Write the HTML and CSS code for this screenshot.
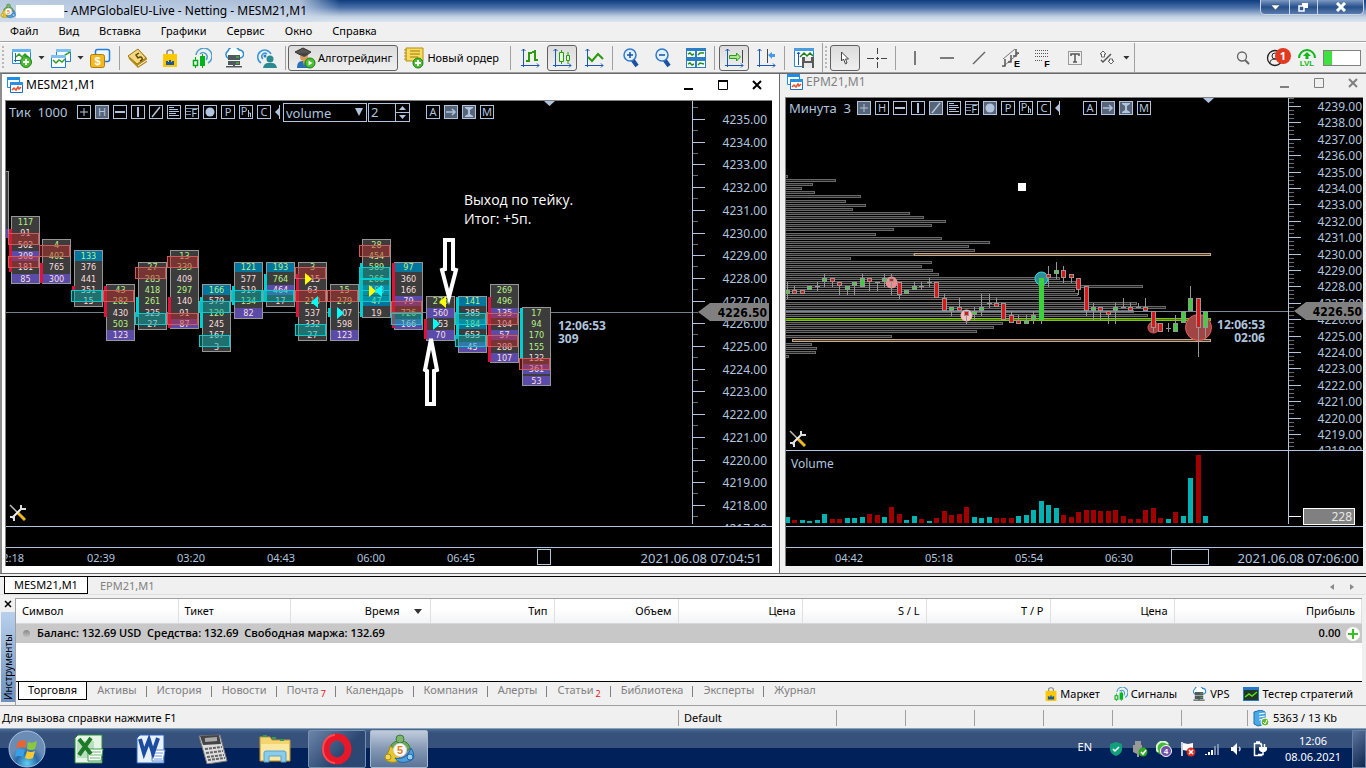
FILE: index.html
```html
<!DOCTYPE html>
<html lang="ru">
<head>
    <meta charset="UTF-8">
    <meta name="viewport" content="width=device-width, initial-scale=1.0">
    <title>AMPGlobalEU-Live - Netting - MESM21,M1</title>
    <link rel="stylesheet" href="styles.css">
</head>
<body>

    <!-- Общие иконки -->
    <svg class="sprite" aria-hidden="true">
        <symbol id="i-mt5" viewBox="0 0 32 32">
            <path d="M7 17c0-6 4-8 7-9h6c4 1 7 4 7 8l-4 2-12 1z" fill="#6aa85c" stroke="#3c7a36"/><circle cx="17" cy="6" r="4" fill="#7cb86c" stroke="#3c7a36"/>
            <path d="M7 13c5 2 5 9 11 13-4 5-15 4-16-1 1-3 4-5 5-12z" fill="#e6c62c" stroke="#a88a10"/><circle cx="5" cy="24" r="3" fill="#f0d860" stroke="#a88a10"/>
            <path d="M28 15c4 6 4 12-2 13-6 3-12 1-14-3 8 2 13-2 16-10z" fill="#4f9fdc" stroke="#1c66a8"/><circle cx="27" cy="24" r="3" fill="#9cd0f4" stroke="#1c66a8"/>
            <circle cx="17" cy="17" r="6.500" fill="#fff" stroke="#d8d8d8"/>
            <text x="17" y="21" class="five">5</text>
        </symbol>
        <symbol id="i-win" viewBox="0 0 16 16">
            <path d="M.5.5h12v10H.5z" fill="#fff" stroke="#1e8fe8"/><path d="M0 0h13v3H0z" fill="#1e8fe8"/>
            <path d="M3.500 5.500h12v10h-12z" fill="#fff" stroke="#1e6fc8"/><path d="M3 5h13v3H3z" fill="#2a90e0"/>
            <path d="M5 13l2-2 2 2 2-3 1 2 2-2" fill="none" stroke="#e8502a" stroke-width="1.500"/>
        </symbol>
        <symbol id="i-bag" viewBox="0 0 14 18">
            <path d="M4 6V3q0-2 3-2t3 2v3" fill="none" stroke="#888" stroke-width="1.500"/>
            <path d="M0 5h14v13H0z" fill="#ffc800"/><path d="M3 16v-4h2v1h1v-2h2v2h1v-1h2v4z" fill="#1c58a0"/>
        </symbol>
        <symbol id="i-signal" viewBox="0 0 20 20">
            <path d="M4 7a8 8 0 1 1 12 8M8 6a4 4 0 1 1 6 6" fill="none" stroke="#4c9ed0" stroke-width="1.500"/>
            <path d="M3.500 9v11M10.500 6v14" stroke="#00a818"/><path d="M1.500 12.500h4v5h-4z" fill="#fff" stroke="#00a818" stroke-width="1.500"/><path d="M8 8h5v10H8z" fill="#00b41c"/>
        </symbol>
        <symbol id="i-cloud" viewBox="0 0 20 20">
            <path d="M4 10a4 4 0 0 1 0-7 6 6 0 0 1 11-1 4 4 0 0 1 1 8z" fill="#fff" stroke="#2b8cd2" stroke-width="1.500"/>
            <path d="M4 7h12v5H4zM4 13h12v4H4zM9 17h2v2H9zM2 18h16v1.500H2z" fill="#505a5c"/><path d="M12 9h3M12 15h3" stroke="#54d832"/>
        </symbol>
        <symbol id="i-tools" viewBox="0 0 18 18">
            <path d="M1 1l9 9" stroke="#bbb" stroke-width="1.500"/><path d="M9 9l7 7" stroke="#f0b820" stroke-width="3"/>
            <path d="M3 14L13 4" stroke="#eee" stroke-width="2"/><path d="M12 1v4h5M1 13h4v4" fill="none" stroke="#ddd" stroke-width="2"/>
        </symbol>
    </svg>

    <header class="titlebar">
        <svg class="app-icon"><use href="#i-mt5"/></svg>
        <span class="account"></span>
        <h1>- AMPGlobalEU-Live - Netting - MESM21,M1</h1>
        <div class="win-buttons">
            <button aria-label="Свернуть"><svg width="11" height="7"><path d="M1 1h9l-4.500 5z" fill="#fff" stroke="#345" stroke-width=".5"/></svg></button>
            <button aria-label="Восстановить"><svg width="11" height="10"><path d="M4 1h6v5H4z" fill="#fff"/><path d="M1 4h5v5H1z" fill="#345a90" stroke="#fff" stroke-width="1.500"/></svg></button>
            <button class="wide" aria-label="Закрыть"><svg width="12" height="10"><path d="M2 1l8 8M10 1l-8 8" stroke="#fff" stroke-width="3"/></svg></button>
        </div>
    </header>

    <nav class="menubar">
        <button>Файл</button>
        <button>Вид</button>
        <button>Вставка</button>
        <button>Графики</button>
        <button>Сервис</button>
        <button>Окно</button>
        <button>Справка</button>
    </nav>

    <div class="toolbar">
        <span class="grip"></span>
        <button class="tool" aria-label="Новый график"><svg width="22" height="20"><path d="M1.500 1.500h18v14h-18z" fill="#fff" stroke="#2a8ce0"/><path d="M1 1h19v3H1z" fill="#68b4f0"/><path d="M4.500 5v9M3 12.500h14" stroke="#2068b0"/><path d="M5 9l3-3 3 3 3-3 4 4" fill="none" stroke="#30a020" stroke-width="1.500"/><circle cx="15" cy="14" r="5.500" fill="#4cc030" stroke="#218018"/><path d="M12 14h6M15 11v6" stroke="#fff" stroke-width="2"/></svg></button>
        <button class="caret" aria-label="Список графиков"></button>
        <button class="tool" aria-label="Профили"><svg width="22" height="20"><path d="M6.500 1.500h14v12h-14z" fill="#fff" stroke="#1f7fd8"/><path d="M6 1h15v3H6z" fill="#7cc0f4"/><path d="M12 10l3-3 5-3" fill="none" stroke="#30a020" stroke-width="1.500"/><path d="M1.500 7.500h14v12h-14z" fill="#fff" stroke="#1f7fd8"/><path d="M1 7h15v3H1z" fill="#7cc0f4"/><path d="M3 12l3 3 3-3 3 2 3-3" fill="none" stroke="#30a020" stroke-width="1.500"/></svg></button>
        <button class="caret" aria-label="Список профилей"></button>
        <button class="tool" aria-label="Обзор рынка"><svg width="22" height="20"><rect x="6.500" y="1.500" width="14" height="12" rx="2" fill="#eef7ff" stroke="#1f7fd8" stroke-width="1.500"/><rect x="1.500" y="6.500" width="14" height="13" rx="2" fill="#f4b820" stroke="#b07c08"/><text x="8.500" y="17" class="dollar">$</text></svg></button>
        <span class="sep"></span>
        <button class="tool" aria-label="Стакан"><svg width="22" height="20"><path d="M1 8l10-7 9 9v4l-9 6-9-9z" fill="#b88818"/><path d="M1 8l10-7 8 9-9 6z" fill="#f4d880" stroke="#a07c18"/><path d="M12 5l-3 2 2 3q3-2 4 0t-2 3" fill="none" stroke="#604808" stroke-width="1.500"/><path d="M11 18l9-6" stroke="#fff"/></svg></button>
        <button class="tool" aria-label="Маркет"><svg width="14" height="18"><use href="#i-bag"/></svg></button>
        <button class="tool" aria-label="Сигналы"><svg width="20" height="20"><use href="#i-signal"/></svg></button>
        <button class="tool" aria-label="VPS"><svg width="20" height="20"><use href="#i-cloud"/></svg></button>
        <button class="tool" aria-label="Сообщество"><svg width="22" height="20"><path d="M6 15A7 7 0 1 1 16 6M8 11a3 3 0 1 1 4-5" fill="none" stroke="#3a96d8" stroke-width="1.500"/><circle cx="10" cy="8" r="1.500" fill="#2880c0"/><circle cx="15" cy="11" r="3.500" fill="#2a8a90"/><path d="M8 20q1-5 5-5h4q4 0 5 5z" fill="#2a8a90"/></svg></button>
        <span class="sep"></span>
        <button class="text-tool pressed"><svg width="22" height="22"><path d="M1 5l8-4 8 4-7 5z" fill="#555" stroke="#333"/><circle cx="10" cy="10" r="4" fill="#d89a60"/><path d="M6 8l4 2 4-2V6H6z" fill="#444"/><path d="M3 21q0-7 5-7h4q5 0 5 7z" fill="#2a70b8"/><path d="M9 14l1 5 1-5z" fill="#f0b020"/><circle cx="16" cy="16" r="5" fill="#48c030" stroke="#208018"/><path d="M14.500 13.500l4 2.500-4 2.500z" fill="#fff"/></svg>Алготрейдинг</button>
        <button class="text-tool"><svg width="22" height="22"><path d="M3 1h17v13H3z" fill="#f8dc60" stroke="#b48c10"/><path d="M1 3h3M1 6h3M1 9h3M1 12h3" stroke="#b48c10"/><path d="M7 4h10M7 7h10M7 10h8" stroke="#a07808"/><circle cx="15" cy="16" r="5" fill="#48c030" stroke="#208018"/><path d="M12 16h6M15 13v6" stroke="#fff" stroke-width="2"/></svg>Новый ордер</button>
        <span class="sep wide-sep"></span>
        <button class="tool" aria-label="Бары"><svg width="20" height="20"><path d="M3.500 1v18M1 17.500h18M1.500 3l2-2 2 2M17 15.500l2 2-2 2" fill="none" stroke="#1a56b8"/><path d="M9 4v10M6 13h3M9 5h3M15 2v11M12 4h3M15 12h3" stroke="#2a9a10" stroke-width="2"/></svg></button>
        <button class="tool pressed" aria-label="Свечи"><svg width="20" height="20"><path d="M3.500 1v18M1 17.500h18M1.500 3l2-2 2 2M17 15.500l2 2-2 2" fill="none" stroke="#1a56b8"/><path d="M9.500 2v14M16 4v12" stroke="#2a9a10"/><path d="M7.500 4.500h4v9h-4zM14.500 7.500h3v5h-3z" fill="#e8ffe0" stroke="#2a9a10"/></svg></button>
        <button class="tool" aria-label="Линия"><svg width="20" height="20"><path d="M3.500 1v18M1 17.500h18M1.500 3l2-2 2 2M17 15.500l2 2-2 2" fill="none" stroke="#1a56b8"/><path d="M4 9l4 4 6-7 5 5" fill="none" stroke="#2a9a10" stroke-width="2"/></svg></button>
        <span class="sep"></span>
        <button class="tool" aria-label="Увеличить"><svg width="20" height="20"><path d="M10 11l5 7" stroke="#1c50a0" stroke-width="4"/><circle cx="8" cy="7" r="6" fill="#dff0ff" stroke="#3478c8" stroke-width="1.500"/><path d="M5 7h6M8 4v6" stroke="#1c50a0" stroke-width="1.500"/></svg></button>
        <button class="tool" aria-label="Уменьшить"><svg width="20" height="20"><path d="M10 11l5 7" stroke="#1c50a0" stroke-width="4"/><circle cx="8" cy="7" r="6" fill="#dff0ff" stroke="#3478c8" stroke-width="1.500"/><path d="M5 7h6" stroke="#1c50a0" stroke-width="1.500"/></svg></button>
        <button class="tool" aria-label="Плитка"><svg width="20" height="20"><path d="M0 0h20v20H0z" fill="#2a80c8"/><path d="M1 3h8v6H1zM11 3h8v6h-8zM1 13h8v6H1zM11 13h8v6h-8z" fill="#fff"/><path d="M2 6l2-1 2 2 2-1M12 7l2-2 4 0M2 16l2-1 2 2 2-1M12 17l2-2 4 1" fill="none" stroke="#209018" stroke-width="1.500"/></svg></button>
        <span class="sep"></span>
        <button class="tool pressed" aria-label="Автопрокрутка"><svg width="20" height="20"><path d="M3.500 1v18M1 17.500h18M1.500 3l2-2 2 2M17 15.500l2 2-2 2" fill="none" stroke="#1a56b8"/><path d="M18.500 2v13" stroke="#444"/><path d="M5.500 7.500h7V5l4 4-4 4v-2.500h-7z" fill="#a8e890" stroke="#2c9a18"/></svg></button>
        <button class="tool" aria-label="Сдвиг графика"><svg width="20" height="20"><path d="M3.500 1v18M1 17.500h18M1.500 3l2-2 2 2M17 15.500l2 2-2 2" fill="none" stroke="#1a56b8"/><path d="M11.500 1v14" stroke="#444"/><path d="M19 6h-3V4l-4 3 4 4V9h3z" fill="#4a98e8"/></svg></button>
        <span class="sep"></span>
        <button class="tool" aria-label="Шаблоны"><svg width="20" height="20"><path d="M.5.5h19v18H.5z" fill="#fff" stroke="#2a88d8"/><path d="M0 0h20v3H0z" fill="#4a9ce0"/><path d="M4.500 4v13M3 6l1.500-2L6 6" fill="none" stroke="#1a56b8"/><path d="M6 9l4-4 3 3 3-3 3 3" fill="none" stroke="#208018" stroke-width="1.500"/><path d="M8 9h12v11H8z" fill="#5a5a5a"/><path d="M11 9h6v4h-6zM10 15h8v5h-8z" fill="#e8e8e8"/></svg></button>
        <span class="edge"></span>
        <span class="grip"></span>
        <button class="tool pressed" aria-label="Курсор"><svg width="10" height="14"><path d="M1.500 1v9l2-2 2 5 1.500-1-1.500-4h3z" fill="#fff" stroke="#444"/></svg></button>
        <button class="tool" aria-label="Перекрестие"><svg width="20" height="20"><path d="M0 10.500h7M9 10.500h3M14 10.500h6M10.500 0v6M10.500 9v3M10.500 14v6" stroke="#444"/></svg></button>
        <span class="sep"></span>
        <button class="tool" aria-label="Вертикальная линия"><svg width="4" height="14"><path d="M2 0v14" stroke="#555" stroke-width="1.500"/></svg></button>
        <button class="tool" aria-label="Горизонтальная линия"><svg width="14" height="4"><path d="M0 2h14" stroke="#555" stroke-width="1.500"/></svg></button>
        <button class="tool" aria-label="Трендовая линия"><svg width="14" height="14"><path d="M1 13L13 1" stroke="#666" stroke-width="1.500"/></svg></button>
        <button class="tool" aria-label="Каналы"><svg width="20" height="20"><path d="M2 11L14 1M4 17L18 5" stroke="#777"/><path d="M1 18h3v-7M7 14h3V7M12 8h3V1M15 5h3" fill="none" stroke="#555" stroke-width="1.500"/><text x="16" y="19" class="letter">E</text></svg></button>
        <button class="tool" aria-label="Фибоначчи"><svg width="18" height="20"><path d="M1 2.500h14M1 5.500h14M1 8.500h14M1 12.500h8" stroke="#555" stroke-dasharray="1 1"/><text x="13" y="19" class="letter">F</text></svg></button>
        <button class="tool" aria-label="Текст"><svg width="16" height="16"><path d="M1.500 1.500h13v13h-13z" fill="none" stroke="#444" stroke-dasharray="1 1"/><path d="M4 6V4h8v2M8 4v8M6 12h4" fill="none" stroke="#555" stroke-width="1.500"/></svg></button>
        <button class="tool" aria-label="Объекты"><svg width="16" height="16"><path d="M4 1l3 3H5.500v3h-3V4H1zM12 14l-3-3h1.500V9h3v2H15z" fill="#fff" stroke="#666"/><path d="M2 10l2 2 8-8" fill="none" stroke="#555" stroke-width="1.500"/></svg></button>
        <button class="caret" aria-label="Список объектов"></button>
        <span class="edge"></span>
        <div class="toolbar-right">
            <button class="tool" aria-label="Поиск"><svg width="14" height="14"><circle cx="6" cy="5.500" r="4.500" fill="none" stroke="#666" stroke-width="1.300"/><path d="M9 9l4 4" stroke="#666" stroke-width="2"/></svg></button>
            <button class="tool account-tool" aria-label="Уведомления"><svg width="18" height="18"><circle cx="9" cy="9" r="7.500" fill="none" stroke="#222" stroke-width="1.300"/><circle cx="9" cy="7" r="3" fill="none" stroke="#222"/><path d="M4 14q0-4 5-4t5 4" fill="none" stroke="#222"/></svg><span class="badge">1</span></button>
            <button class="tool" aria-label="Уровень"><svg width="20" height="20"><path d="M2 10a8 8 0 0 1 16 0" fill="none" stroke="#10b818" stroke-width="2"/><path d="M10 4l4 4h-2.500v3h-3V8H6z" fill="#10b818"/><text x="10" y="18" class="lvl">LVL</text></svg></button>
            <span class="level"><i></i></span>
        </div>
    </div>

    <main class="workspace">
        <section class="window active" id="mes">
            <header>
                <svg width="16" height="16"><use href="#i-win"/></svg>
                <h2>MESM21,M1</h2>
                <div class="mdi-buttons">
                    <button aria-label="Свернуть окно"><svg width="12" height="12"><path d="M1 10h9" stroke="currentColor" stroke-width="2"/></svg></button>
                    <button aria-label="Развернуть окно"><svg width="12" height="12"><path d="M1.500 1.500h9v9h-9z" fill="none" stroke="currentColor"/><path d="M1 2h10" stroke="currentColor" stroke-width="2"/></svg></button>
                    <button aria-label="Закрыть окно"><svg width="12" height="12"><path d="M2 2l8 8M10 2l-8 8" stroke="currentColor" stroke-width="2"/></svg></button>
                </div>
            </header>
            <div class="chart">
                <div class="chart-tools">
                    <span class="period">Тик&nbsp; 1000</span>
                    <div class="mini" data-set="draw" data-on="H"></div>
                    <select aria-label="Тип данных"><option>volume</option></select>
                    <span class="spin">
                        <input type="text" value="2" aria-label="Множитель">
                        <button aria-label="Больше"><svg width="7" height="4"><path d="M0 4h7L3.500 0z" fill="#b0c4de"/></svg></button>
                        <button aria-label="Меньше"><svg width="7" height="4"><path d="M0 0h7L3.500 4z" fill="#b0c4de"/></svg></button>
                    </span>
                    <div class="mini" data-set="mode" data-on="arrow,ibeam"></div>
                </div>
                <div class="row main-row">
                    <svg class="plot" id="clusterPlot"></svg>
                    <svg class="axis" id="clusterAxis"></svg>
                </div>
                <div class="gap-row"></div>
                <div class="row time-row">
                    <svg class="plot" id="clusterTime"></svg>
                    <time>2021.06.08 07:04:51</time>
                </div>
            </div>
        </section>
        <section class="window" id="epm">
            <header>
                <svg width="16" height="16"><use href="#i-win"/></svg>
                <h2>EPM21,M1</h2>
                <div class="mdi-buttons">
                    <button aria-label="Свернуть окно"><svg width="12" height="12"><path d="M1 10h9" stroke="currentColor" stroke-width="2"/></svg></button>
                    <button aria-label="Развернуть окно"><svg width="12" height="12"><path d="M1.500 1.500h9v9h-9z" fill="none" stroke="currentColor"/></svg></button>
                    <button aria-label="Закрыть окно"><svg width="12" height="12"><path d="M2 2l8 8M10 2l-8 8" stroke="currentColor" stroke-width="2"/></svg></button>
                </div>
            </header>
            <div class="chart">
                <div class="chart-tools">
                    <span class="period">Минута&nbsp; 3</span>
                    <div class="mini" data-set="draw" data-on="plus,line,dot"></div>
                    <div class="mini" data-set="mode" data-on="arrow,ibeam"></div>
                </div>
                <div class="row main-row">
                    <svg class="plot" id="candlePlot"></svg>
                    <svg class="axis" id="candleAxis"></svg>
                </div>
                <div class="row volume-row">
                    <svg class="plot" id="volumePlot"></svg>
                    <svg class="axis" id="volumeAxis"></svg>
                </div>
                <div class="gap-row"></div>
                <div class="row time-row">
                    <svg class="plot" id="candleTime"></svg>
                    <time>2021.06.08 07:06:00</time>
                </div>
            </div>
        </section>
    </main>

    <nav class="chart-tabs">
        <button class="current">MESM21,M1</button>
        <button>EPM21,M1</button>
        <span class="scroll"><button aria-label="Назад"><svg width="4" height="6"><path d="M4 0v6L0 3z" fill="#888"/></svg></button><button aria-label="Вперед"><svg width="4" height="6"><path d="M0 0v6l4-3z" fill="#888"/></svg></button></span>
    </nav>

    <section class="terminal">
        <aside>
            <button aria-label="Закрыть панель"><svg width="8" height="8"><path d="M1 1l6 6M7 1L1 7" stroke="#000" stroke-width="1.500"/></svg></button>
            <span>Инструменты</span>
        </aside>
        <div class="panel">
            <table>
                <colgroup><col class="c-symbol"><col class="c-ticket"><col class="c-time"><col class="c"><col class="c"><col class="c"><col class="c"><col class="c"><col class="c"><col></colgroup>
                <thead>
                    <tr>
                        <th class="left">Символ</th>
                        <th class="left">Тикет</th>
                        <th class="sorted">Время<svg width="8" height="5"><path d="M0 0h8L4 5z" fill="#333"/></svg></th>
                        <th>Тип</th>
                        <th>Объем</th>
                        <th>Цена</th>
                        <th>S / L</th>
                        <th>T / P</th>
                        <th>Цена</th>
                        <th>Прибыль</th>
                    </tr>
                </thead>
                <tbody>
                    <tr>
                        <td colspan="9"><i class="dot"></i>Баланс: 132.69 USD&nbsp; Средства: 132.69&nbsp; Свободная маржа: 132.69</td>
                        <td class="profit">0.00<button aria-label="Добавить"><svg width="14" height="14"><circle cx="7" cy="7" r="7" fill="#fff"/><path d="M2 7h10M7 2v10" stroke="#38c020" stroke-width="2"/></svg></button></td>
                    </tr>
                </tbody>
            </table>
            <nav class="panel-tabs">
                <button class="current">Торговля</button>
                <button>Активы</button>
                <button>История</button>
                <button>Новости</button>
                <button>Почта<sub>7</sub></button>
                <button>Календарь</button>
                <button>Компания</button>
                <button>Алерты</button>
                <button>Статьи<sub>2</sub></button>
                <button>Библиотека</button>
                <button>Эксперты</button>
                <button>Журнал</button>
                <div class="services">
                    <a href="#"><svg width="12" height="14"><use href="#i-bag"/></svg>Маркет</a>
                    <a href="#"><svg width="14" height="14"><use href="#i-signal"/></svg>Сигналы</a>
                    <a href="#"><svg width="16" height="14"><use href="#i-cloud"/></svg>VPS</a>
                    <a href="#"><svg width="16" height="14"><path d="M0 0h16v14H0z" fill="#2878c8"/><path d="M1 3h14v10H1z" fill="#203828"/><path d="M2 10l4-3 3 2 5-4" fill="none" stroke="#58e020" stroke-width="1.500"/></svg>Тестер стратегий</a>
                </div>
            </nav>
        </div>
    </section>

    <footer class="statusbar">
        <span class="help">Для вызова справки нажмите F1</span>
        <span class="profile">Default</span>
        <span class="cell"></span>
        <span class="cell"></span>
        <span class="cell"></span>
        <span class="cell"></span>
        <span class="cell"></span>
        <span class="traffic"><svg width="17" height="17"><path d="M1 2l7-2 4 2v12l-7 2-4-2z" fill="#48a8e8" stroke="#1870b0"/><path d="M6 4l6-1M6 7l6-1M6 10l6-1" stroke="#fff"/><circle cx="12" cy="12" r="4" fill="#60b830" stroke="#fff"/><path d="M10 12l2 2 2-4" fill="none" stroke="#fff"/></svg>5363 / 13 Kb</span>
    </footer>

    <div class="taskbar">
        <button class="start" aria-label="Пуск"><svg width="40" height="38"><defs><radialGradient id="orb" cy=".9"><stop offset="0" stop-color="#5fd0f4"/><stop offset=".6" stop-color="#2a6aa8"/><stop offset="1" stop-color="#6b8cb4"/></radialGradient></defs><circle cx="20" cy="19" r="18" fill="url(#orb)" stroke="#a8c4dc"/><path d="M11 12q4-3 8-1l-1 7q-4-2-9 0z" fill="#f0622c"/><path d="M21 12q4 2 9-1l-2 8q-4 2-8 0z" fill="#8cc83c"/><path d="M9 20q5-2 9 0l-2 7q-4-2-8 0z" fill="#38a0e8"/><path d="M20 21q4 2 8 0l-2 7q-4 2-8 0z" fill="#fcc830"/></svg></button>
        <button class="task" aria-label="Excel"><svg width="30" height="30"><path d="M1 4l3-3h24v28H1z" fill="#e6f4e6" stroke="#2c8a38"/><path d="M3 7h17v17H3z" fill="#b8e0bc"/><path d="M14 15h15l-2 12H14z" fill="#fff" stroke="#3a9a48"/><path d="M16 18h11M16 21h11M16 24h10" stroke="#6ab870"/><path d="M5 5l12 15M17 4L5 21" stroke="#1c7a28" stroke-width="4"/></svg></button>
        <button class="task" aria-label="Word"><svg width="30" height="30"><path d="M1 4l3-3h24v28H1z" fill="#e8f0fc" stroke="#2a64b8"/><path d="M16 16h13l-2 11H16z" fill="#fff" stroke="#5a8cd0"/><path d="M18 19h9M18 22h8M18 25h8" stroke="#6a98d8"/><path d="M4 5l4 14 5-13 4 13 5-15" fill="none" stroke="#1c4ca0" stroke-width="4"/></svg></button>
        <button class="task" aria-label="Калькулятор"><svg width="30" height="30"><path d="M1 2l21-1 7 26-20 3z" fill="#ddd" stroke="#777"/><path d="M2 2l19-1 2 9-18 1z" fill="#444"/><path d="M7 6l12-1" stroke="#aaa" stroke-width="4"/><path d="M7 15l17-2M8 19l17-2M9 23l17-2M10 26l17-2" stroke="#666" stroke-width="2" stroke-dasharray="3 1"/></svg></button>
        <button class="task" aria-label="Проводник"><svg width="32" height="30"><path d="M1 3h10l2 3h18v21H1z" fill="#f4d470" stroke="#c49a30"/><path d="M4 2h4M13 4h4M21 6h4" stroke="#30a050" stroke-width="2"/><path d="M2 10h28v16H2z" fill="#fbe8a0"/><path d="M5 28V19q0-2 2-2h18q2 0 2 2v9h-5v-6H10v6z" fill="#8accec" stroke="#5aa0cc"/></svg></button>
        <button class="task open" aria-label="Opera"><svg width="32" height="32"><ellipse cx="16" cy="16" rx="11" ry="12" fill="none" stroke="#e81828" stroke-width="7"/><path d="M14 2a12 14 0 0 0 0 28" fill="none" stroke="#ff4a50" stroke-width="2"/></svg></button>
        <button class="task focused" aria-label="MetaTrader 5"><svg width="32" height="32"><use href="#i-mt5"/></svg></button>
        <div class="tray">
            <span class="lang">EN</span>
            <svg width="16" height="16"><path d="M2 3l6-2 6 2v6q-1 4-6 6-5-2-6-6z" fill="#10a07c"/><path d="M5 8l2 2 4-4" fill="none" stroke="#fff" stroke-width="1.500"/></svg>
            <svg width="16" height="16"><path d="M3 0h6v4H3zM1 4h9v7l-3 2v3H5v-3l-4-2z" fill="#999"/><circle cx="11" cy="11" r="4.500" fill="#30a820"/><path d="M9 11l2 2 3-4" fill="none" stroke="#fff" stroke-width="1.500"/></svg>
            <svg width="16" height="16"><circle cx="7" cy="7" r="7" fill="#48b838"/><path d="M2 11A6 6 0 0 1 12 3" fill="none" stroke="#d8f8d0" stroke-width="2"/><circle cx="10" cy="10" r="5.500" fill="#7050a8" stroke="#fff"/><text x="10" y="13" class="tray-num">4</text></svg>
            <svg width="16" height="16"><path d="M2 1v14" stroke="#fff" stroke-width="1.500"/><path d="M3 2l5 1 5-1v7l-5 1-5-1z" fill="#fff"/><circle cx="11" cy="11" r="4.500" fill="#d83020"/><path d="M9 9l4 4M13 9l-4 4" stroke="#fff" stroke-width="1.500"/></svg>
            <svg width="16" height="16"><path d="M1 13h2v1H1zM4 11h2v3H4zM7 9h2v5H7z" fill="#fff"/><path d="M10 5h2v9h-2zM13 3h2v11h-2z" fill="#7a8cac"/></svg>
            <svg width="16" height="16"><path d="M3 6h2l4-4v12l-4-4H3z" fill="#fff"/><path d="M11 6q2 2 0 4" fill="none" stroke="#ccd" stroke-width="1.500"/></svg>
            <svg width="16" height="16"><path d="M9 4V2.500H2.500v12h7V13M4 1h4" fill="none" stroke="#fff" stroke-width="1.500"/><path d="M7 6h8v3l-2 2H9L7 9z" fill="#fff"/><path d="M9.500 3v3M12.500 3v3M11 11v2.500H6" fill="none" stroke="#fff" stroke-width="1.500"/></svg>
        </div>
        <div class="clock"><span>12:06</span><span>08.06.2021</span></div>
        <button class="show-desktop" aria-label="Показать рабочий стол"></button>
    </div>

    <script src="charts.js"></script>
</body>
</html>
```
FILE: styles.css
```css
* {
    box-sizing: border-box;
}
body {
    display: flex;
    flex-direction: column;
    min-height: 100vh;
    margin: 0;
    overflow: hidden;
    background: #f0f0f0;
    color: #000;
    font-family: "Noto Sans", "Open Sans", sans-serif;
    font-size: 12px;
    line-height: 16px;
}
button {
    padding: 0;
    border: 0;
    background: none;
    color: inherit;
    font: inherit;
}
svg {
    flex: none;
}
h1, h2 {
    margin: 0;
    font-size: 12px;
    font-weight: 400;
    white-space: nowrap;
}
.sprite {
    position: absolute;
    width: 0;
    height: 0;
}
.five {
    font: bold 11px "Liberation Sans", sans-serif;
    fill: #f07820;
    text-anchor: middle;
}

/* Заголовок окна */
.titlebar {
    display: flex;
    height: 22px;
    align-items: center;
    background:
        linear-gradient(90deg, rgba(205, 218, 234, .9), rgba(205, 218, 234, .8) 300px, rgba(160, 190, 225, 0) 340px),
        linear-gradient(#0e3c7e, #4a70a8 35%, #c0cfe2 75%, #dce6f2);
}
.app-icon {
    width: 16px;
    height: 16px;
}
.account {
    width: 48px;
    height: 13px;
    background: #fff;
}
.win-buttons {
    display: flex;
    align-self: flex-start;
    height: 15px;
    margin: 0 2px 0 auto;
    border: 1px solid #c8d4e4;
    border-top: 0;
    border-radius: 0 0 5px 5px;
    background: linear-gradient(#7e9ac2, #26508c 50%, #5a7cac);
}
.win-buttons button {
    display: flex;
    width: 28px;
    align-items: center;
    justify-content: center;
}
.win-buttons .wide {
    width: 46px;
}
.win-buttons button + button {
    border-left: 1px solid #c8d4e4;
}

/* Меню */
.menubar {
    display: flex;
    height: 20px;
    padding: 0 0 1px 10px;
    gap: 20px;
    border-bottom: 1px solid #a0a0a0;
    font-size: 11px;
}

/* Панель инструментов */
.toolbar {
    display: flex;
    height: 31px;
    align-items: center;
    border-top: 1px solid #fff;
    border-bottom: 1px solid #a0a0a0;
}
.tool {
    display: flex;
    width: 32px;
    height: 26px;
    align-items: center;
    justify-content: center;
}
.pressed {
    border: 1px solid #606060;
    border-radius: 3px;
    background: linear-gradient(#dcdcdc, #efefef);
}
.tool.pressed {
    width: 30px;
    margin: 0 1px;
}
.caret {
    width: 7px;
    height: 4px;
    background: #333;
    clip-path: polygon(0 0, 100% 0, 50% 100%);
}
.text-tool {
    display: flex;
    height: 26px;
    padding: 0 5px;
    align-items: center;
    gap: 2px;
    font-size: 11px;
    white-space: nowrap;
}
.sep {
    width: 6px;
    height: 24px;
    background: linear-gradient(#a0a0a0, #a0a0a0) center / 1px 100% no-repeat;
}
.wide-sep {
    margin-left: 4px;
}
.edge {
    height: 29px;
    margin-left: 2px;
    border-left: 1px solid #a0a0a0;
}
.caret + .edge {
    margin-left: 4px;
}
.grip {
    width: 2px;
    height: 24px;
    margin: 0 2px;
    background: repeating-linear-gradient(#b8b8b8 0 2px, transparent 2px 4px);
}
.dollar {
    font: bold 11px "Liberation Sans", sans-serif;
    fill: #fff;
    text-anchor: middle;
}
.letter {
    font: bold 9px "Liberation Sans", sans-serif;
    text-anchor: middle;
}
.lvl {
    font: bold 8px "Liberation Sans", sans-serif;
    fill: #10b818;
    text-anchor: middle;
}
.toolbar-right {
    display: flex;
    margin-left: auto;
    padding-right: 5px;
    align-items: center;
}
.account-tool {
    position: relative;
}
.badge {
    position: absolute;
    top: 3px;
    right: 0;
    width: 16px;
    height: 16px;
    border-radius: 8px;
    background: #e03a20;
    color: #fff;
    font-size: 11px;
    font-weight: 700;
}
.level {
    width: 38px;
    height: 16px;
    border: 1px solid #808080;
    background: #fff;
}
.level i {
    display: block;
    width: 8px;
    height: 14px;
    background: #40e040;
}

/* Окна графиков */
.workspace {
    display: flex;
    flex: 1;
    border-bottom: 1px solid #696969;
}
.window {
    display: flex;
    flex: 1;
    min-width: 0;
    flex-direction: column;
    padding: 0 3px 7px 5px;
    border-top: 1px solid #696969;
    color: #808080;
}
.window.active {
    flex: 0 0 57.1%;
    padding: 0 7px 7px 3px;
    border-left: 2px solid #8c8c8c;
    border-right: 1px solid #696969;
    background: #fff;
    color: #000;
}
.window header {
    display: flex;
    height: 23px;
    padding: 0 2px;
    align-items: flex-start;
    gap: 3px;
}
.window.active header {
    height: 26px;
    padding: 3px 7px 0 2px;
}
.mdi-buttons {
    display: flex;
    margin-left: auto;
    padding: 3px 2px;
    gap: 22px;
}
.active .mdi-buttons {
    padding-top: 2px;
}
.mdi-buttons button {
    display: flex;
}
.chart {
    position: relative;
    display: flex;
    flex: 1;
    flex-direction: column;
    border: solid #808080;
    border-width: 1px 0 0 1px;
    background: #000;
    color: #b0c4de;
}
.row {
    display: flex;
}
.plot {
    width: 0;
    flex: 1;
}
.axis {
    width: 80px;
}
#epm .axis {
    width: 75px;
}
.main-row {
    min-height: 352px;
    flex: 1;
}
.volume-row {
    height: 76px;
    border-top: 1px solid #b0c4de;
}
.gap-row {
    height: 21px;
    border-top: 1px solid #b0c4de;
}
.time-row {
    height: 19px;
    border-top: 1px solid #b0c4de;
}
.time-row time {
    padding: 2px 4px 0 0;
    font-size: 13px;
}
#mes .time-row time {
    padding-right: 10px;
}
.chart-tools {
    position: absolute;
    top: 2px;
    left: 3px;
    display: flex;
    height: 18px;
    align-items: center;
}
.period {
    width: 68px;
    font-size: 13px;
    white-space: nowrap;
}
.mini {
    display: flex;
    margin-right: 3px;
    gap: 4px;
}
.mini button {
    display: flex;
    width: 14px;
    height: 14px;
    border: 1px solid #b0c4de;
}
.mini .on {
    background: #586478;
}
.mini .fold {
    width: 5px;
    border-width: 0 1px 0 0;
}
.mini text {
    font-size: 11px;
    fill: #b0c4de;
    text-anchor: middle;
}
#epm .mini {
    margin-right: 23px;
}
#epm .chart-tools {
    top: 1px;
}
.chart-tools select {
    width: 84px;
    height: 19px;
    margin-right: 1px;
    padding: 0 2px;
    appearance: none;
    border: 1px solid #b0c4de;
    border-radius: 0;
    background: #000 url("data:image/svg+xml,%3Csvg xmlns='http://www.w3.org/2000/svg' width='8' height='8'%3E%3Cpath d='M0 0h8L4 8z' fill='%23b0c4de'/%3E%3C/svg%3E") no-repeat right 3px center;
    color: #b0c4de;
    font: 13px "Noto Sans", sans-serif;
}
.spin {
    display: grid;
    width: 42px;
    height: 19px;
    margin-right: 16px;
    grid-template-columns: 1fr 13px;
    grid-template-rows: 8px 9px;
    border: 1px solid #b0c4de;
}
.spin input {
    min-width: 0;
    grid-row: 1 / 3;
    padding: 0 2px;
    border: 0;
    border-right: 1px solid #b0c4de;
    background: #000;
    color: #b0c4de;
    font: 13px "Noto Sans", sans-serif;
}
.spin button {
    display: flex;
    align-items: center;
    justify-content: center;
}
.spin button:last-child {
    border-top: 1px solid #b0c4de;
}

/* Тексты внутри графиков */
.plot text, .axis text {
    font-size: 12px;
    fill: #b0c4de;
}
.plot .cell-text {
    font: 9px "DejaVu Sans Condensed", "DejaVu Sans", sans-serif;
    text-anchor: middle;
}
.plot .bid { fill: #f6dede; }
.plot .ask { fill: #b8f088; }
.plot .timer { font-weight: 700; }
.plot .note {
    font-family: "Open Sans", sans-serif;
    font-size: 14px;
    fill: #fff;
}
.plot .time-label { font-size: 11px; }
.axis .price { text-anchor: end; }
.axis .last {
    font: bold 12px "DejaVu Sans Condensed", "DejaVu Sans", sans-serif;
    fill: #000;
    text-anchor: end;
}
.axis .volume-value {
    fill: #e8e8e8;
    text-anchor: end;
}
#epm .end { text-anchor: end; }

/* Вкладки графиков */
.chart-tabs {
    display: flex;
    height: 19px;
    margin-top: 2px;
    padding-left: 4px;
    border-top: 1px solid #000;
    border-bottom: 1px solid #e0e0e0;
    color: #808080;
    font-size: 11px;
}
.chart-tabs > button {
    height: 17px;
    padding: 1px 12px 0;
}
.chart-tabs .current {
    padding: 0 9px;
    border: 1px solid #000;
    border-top: 0;
    background: #fff;
    color: #000;
}
.scroll {
    display: flex;
    margin-left: auto;
    padding-right: 12px;
    gap: 16px;
}

/* Терминал */
.terminal {
    display: flex;
    height: 107px;
    margin-top: 3px;
    padding-right: 4px;
}
.terminal aside {
    display: flex;
    width: 15px;
    flex-direction: column;
    align-items: center;
    gap: 3px;
    padding: 1px 0 2px;
}
.terminal aside button {
    height: 10px;
    line-height: 8px;
}
.terminal aside span {
    height: 90px;
    padding-top: 2px;
    background: linear-gradient(#6c90c0, #b8d0ec);
    font-size: 10px;
    line-height: 14px;
    writing-mode: vertical-rl;
    transform: rotate(180deg);
}
.panel {
    display: flex;
    flex: 1;
    flex-direction: column;
    border-top: 1px solid #a0a0a0;
    border-left: 1px solid #a0a0a0;
    background: #fff;
    font-size: 11px;
}
table {
    width: 100%;
    table-layout: fixed;
    border-collapse: collapse;
}
.c-symbol { width: 162px; }
.c-ticket { width: 112px; }
.c-time { width: 140px; }
.c { width: 124px; }
th {
    height: 24px;
    padding: 0 6px;
    border-right: 1px solid #e0e0e0;
    border-bottom: 1px solid #d8d8d8;
    background: linear-gradient(#fff 40%, #f2f3f5);
    font-weight: 400;
    text-align: right;
}
.left {
    text-align: left;
}
.sorted svg {
    margin: 0 2px 1px 14px;
}
td {
    height: 20px;
    padding: 0 7px;
    background: #c8c8c8;
    font-family: "Open Sans", sans-serif;
    font-weight: 600;
}
.dot {
    display: inline-block;
    width: 7px;
    height: 7px;
    margin-right: 7px;
    border-radius: 4px;
    background: linear-gradient(#888, #c0c0c0);
}
td.profit {
    padding-right: 2px;
    text-align: right;
}
.profit button {
    margin-left: 5px;
    vertical-align: middle;
}
.profit svg {
    display: block;
}
.panel-tabs {
    display: flex;
    height: 24px;
    margin-top: auto;
    padding-left: 2px;
    border-top: 1px solid #000;
    background: #f0f0f0;
    color: #808080;
}
.panel-tabs > button {
    height: 18px;
    padding: 0 10px 2px;
    background: linear-gradient(#808080, #808080) right 4px / 1px 11px no-repeat;
}
.panel-tabs .current {
    padding: 0 9px 1px;
    border: 1px solid #000;
    border-top: 0;
    background: #fff;
    color: #000;
}
.panel-tabs > button:last-of-type {
    background: none;
}
sub {
    margin-left: 2px;
    color: #e01020;
    font-size: 9px;
    line-height: 0;
}
.services {
    display: flex;
    margin-left: auto;
    padding: 4px 9px 4px 0;
    gap: 14px;
}
.services a {
    display: flex;
    align-items: center;
    gap: 3px;
    color: #000;
    text-decoration: none;
}

/* Строка состояния */
.statusbar {
    display: flex;
    height: 23px;
    padding: 4px 0 2px 2px;
    border-top: 1px solid #a0a0a0;
    font-size: 11px;
}
.help {
    flex: 1;
}
.statusbar span + span {
    padding-left: 5px;
    border-left: 1px solid #a0a0a0;
}
.profile { width: 158px; }
.cell { width: 69px; }
.statusbar .traffic {
    display: flex;
    width: 185px;
    padding-left: 71px;
    gap: 3px;
    background: linear-gradient(#a0a0a0, #a0a0a0) 65px 0 / 1px 100% no-repeat;
    white-space: nowrap;
}

/* Панель задач */
.taskbar {
    display: flex;
    height: 40px;
    align-items: center;
    border-top: 1px solid #8aa4bc;
    background: linear-gradient(#4c6c94, #35517c 4px 19px, #00215a 19px);
    color: #fff;
}
.start {
    display: flex;
    width: 60px;
    padding-left: 7px;
}
.task {
    display: flex;
    width: 58px;
    height: 38px;
    margin-right: 4px;
    align-items: center;
    justify-content: center;
    border-radius: 2px;
}
.open {
    border: 1px solid #7890b0;
    background: linear-gradient(135deg, #6c84a8, #2c4872 60%);
}
.focused {
    border: 1px solid #a8b8cc;
    background: linear-gradient(#c0ccdc, #8498b4 50%, #5c7498);
}
.tray {
    display: flex;
    margin-left: auto;
    align-items: center;
    gap: 8px;
}
.lang {
    margin: -4px 8px 0 0;
    font-size: 11px;
}
.tray-num {
    font: bold 8px "Liberation Sans", sans-serif;
    fill: #fff;
    text-anchor: middle;
}
.clock {
    display: flex;
    width: 84px;
    padding-left: 6px;
    flex-direction: column;
    align-items: center;
    font-size: 11px;
}
.show-desktop {
    width: 14px;
    height: 38px;
    border: 1px solid #6880a4;
    background: linear-gradient(135deg, #5c749c, #10284e);
}
```
FILE: charts.js
```js
const STEEL = '#b0c4de';
const RED = '#dc143c';
const TEAL = '#00ced1';

function rect(x, y, w, h, attrs) {
    return `<rect x="${x}" y="${y}" width="${w}" height="${h}" ${attrs}/>`;
}
function line(x1, y1, x2, y2, color) {
    return `<path d="M${x1} ${y1}L${x2} ${y2}" stroke="${color}"/>`;
}
function text(x, y, cls, value) {
    return `<text x="${x}" y="${y}" class="${cls}">${value}</text>`;
}
// сдвиг начала координат рисунка
function draw(id, dx, dy, body) {
    document.getElementById(id).innerHTML = `<g transform="translate(${-dx} ${-dy})">${body}</g>`;
}

// Кнопки над графиком
const GLYPHS = {
    plus: '<path d="M2 6h8M6 2v8" stroke="#b0c4de"/>',
    H: '<text x="6" y="10">H</text>',
    dash: '<path d="M1 6h10" stroke="#b0c4de" stroke-width="2"/>',
    bar: '<path d="M6 1v10" stroke="#b0c4de" stroke-width="2"/>',
    line: '<path d="M2 11L10 1" stroke="#b0c4de" stroke-width="1.500"/>',
    rows: '<path d="M1 1.500h5M1 3.500h9M1 5.500h10M1 7.500h7M1 9.500h10" stroke="#b0c4de"/>',
    F: '<path d="M0 2.500h12M0 5.500h5M0 8.500h5" stroke="#8090a8"/><text x="8" y="11">F</text>',
    dot: '<circle cx="6" cy="6" r="4.500" fill="#b0c4de"/>',
    P: '<text x="6" y="10">P</text>',
    Ph: '<text x="4" y="9">P</text><path d="M8.500 4v7M8.500 7h2v4" fill="none" stroke="#b0c4de"/>',
    C: '<text x="6" y="10">C</text>',
    A: '<text x="6" y="10">A</text>',
    arrow: '<path d="M1 6h9M7 3l3 3-3 3" fill="none" stroke="#b0c4de" stroke-width="1.500"/>',
    ibeam: '<path d="M2 1h8v1L7 4v4l3 2v1H2v-1l3-2V4L2 2z" fill="#b0c4de"/>',
    M: '<text x="6" y="10">M</text>'
};
const SETS = {
    draw: ['plus', 'H', 'dash', 'bar', 'line', 'rows', 'F', 'dot', 'P', 'Ph', 'C'],
    mode: ['A', 'arrow', 'ibeam', 'M']
};
document.querySelectorAll('.mini').forEach(box => {
    const on = box.dataset.on.split(',');
    box.innerHTML = SETS[box.dataset.set].map(name =>
        `<button class="${on.includes(name) ? 'on' : ''}" aria-label="${name}"><svg width="12" height="12">${GLYPHS[name]}</svg></button>`
    ).join('');
    if (box.dataset.set === 'draw') {
        box.innerHTML += '<button class="fold" aria-label="Скрыть"><svg width="4" height="14"><path d="M4 3v8L0 7z" fill="#b0c4de"/></svg></button>';
    }
});

// Кластерный график: строка = 0.5 пункта
const rowY = k => 119.7 + 11.35 * k;
// x, первая строка, ячейки (g - покупки, p/t - фон), рамки, полоса слева
const CLUSTERS = [
    [11, 9, '117g 91 502 308p 181 85p', 'r10 r12', RED, 229, 272],
    [42, 11, '4g 402g 765 300p', 'r11', RED, 263, 283],
    [74, 12, '133gt 376 441 351 15', 't15', RED, 286, 290],
    [106, 15, '43g 282g 430 503g 123p', 'r15', RED, 286, 317],
    [138, 13, '27g 283g 418g 261g 325 27', 'r13 t17', TEAL, 297, 317],
    [170, 12, '13g 339g 409 297g 140 91 87p', 'r12 r17', RED, 297, 328],
    [202, 15, '166gt 579 120g 245 167 3', 't16 t19', TEAL, 297, 328],
    [234, 13, '121gt 577 519 134g 82p', 't15', TEAL, 286, 305],
    [266, 13, '193gt 764g 464p 17', 't15', TEAL, 274, 302],
    [298, 13, '3g 415 63 210g 537 332 27', 'r13 r15 t18', RED, 274, 317],
    [330, 15, '15g 279g 107 598 123p', 'r15', TEAL, 308, 317],
    [362, 11, '28g 454g 589g 266g 188t 47gt 19', 'r11 t13 t14 t15', TEAL, 263, 317],
    [394, 13, '97gt 360 166 79p 726g 166p', 'r16 t17', RED, 263, 328],
    [426, 16, '276g 560p 353 70p', '', RED, 319, 339],
    [458, 16, '141gt 385 184gt 653 45p', 't17 t19', TEAL, 297, 339],
    [490, 15, '269g 496g 135p 104 57p 288 107p', 'r17 r19', RED, 297, 362],
    [522, 17, '17g 94g 170g 155g 132 361p 53p', 'r21', TEAL, 308, 358]
];
let out = line(6, 312.5, 700, 312.5, '#708090');
out += rect(0, 171.5, 8.5, 66, 'fill="#3c3c3c" stroke="#969696"') + rect(6, 229, 2, 9, 'fill="#5a4ba8"');
CLUSTERS.forEach(([x, k, cells, boxes, color, y1, y2]) => {
    const list = cells.split(' ');
    const top = Math.round(rowY(k) - 5.7);
    out += rect(x, top, 29, Math.round(11.35 * list.length), 'fill="#3c3c3c"');
    list.forEach((cell, i) => {
        const y = Math.round(rowY(k + i));
        const bg = cell.includes('p') ? '#5a4ba8' : cell.includes('t') ? '#00759e' : '';
        if (bg) out += rect(x, y - 5, 29, 10, `fill="${bg}"`);
        out += text(x + 14.5, y + 3, 'cell-text ' + (cell.includes('g') ? 'ask' : 'bid'), parseInt(cell));
    });
    out += rect(x + .5, top + .5, 28, Math.round(11.35 * list.length) - 1, 'fill="none" stroke="#969696"');
    out += rect(x - 2, y1, 3, y2 - y1, `fill="${color}"`);
    boxes.split(' ').filter(Boolean).forEach(b => {
        const c = b[0] === 'r' ? '#cd5c5c' : TEAL;
        const fill = b[0] === 'r' ? '#c02828' : '#00b0b0';
        out += rect(x - 2.5, Math.round(rowY(+b.slice(1))) + .5, 30, 11, `fill="${fill}" fill-opacity=".45" stroke="${c}"`);
    });
});
// метки сделок
out += '<path d="M305 273l7 6-7 6zM369 285l7 6-7 6zM446 296l-7 6 7 6z" fill="#ff0"/>';
out += '<path d="M318 296l-7 6 7 6zM337 307l7 6-7 6zM382 285l-7 6 7 6zM433 318l7 6-7 6z" fill="#00ffff"/>';
out += '<path d="M445 240h8v29l3 1-7 27-7-27 3-1zM427 404h7v-33l3-1-6-31-6 31 2 1z" fill="#000" stroke="#fff" stroke-width="4"/>';
out += text(464, 205, 'note', 'Выход по тейку.') + text(464, 224, 'note', 'Итог: +5п.');
out += text(558, 330, 'timer', '12:06:53') + text(558, 343, 'timer', '309');
out += '<path d="M544 101h11l-5.500 5z" fill="#b0c4de"/><use href="#i-tools" x="9" y="504" width="18" height="18"/>';
draw('clusterPlot', 6, 101, out);

function priceAxis(id, dx, dy, x, right, top, y0, step, count, minor, end, last, tagX) {
    let s = line(x + .5, dy, x + .5, end, STEEL);
    for (let i = -1; i < count; i++) {
        const y = Math.round(y0 + step * i);
        for (let m = 1; m < minor; m++) {
            const my = Math.round(y + step * m / minor) + .5;
            s += line(x + 1, my, x + 6, my, '#6a6a6a');
        }
        if (i < 0) continue;
        s += line(x + 1, y + .5, x + 13, y + .5, STEEL) + text(right, y + 5, 'price', (top - i) + '.00');
    }
    s += `<path d="M${tagX} ${last}l12-9H${right + 2}v18H${tagX + 12}z" fill="#808080"/>`;
    draw(id, dx, dy, s + text(right, last + 5, 'last', '4226.50'));
}
priceAxis('clusterAxis', 692, 101, 692, 767, 4235, 119, 22.7, 19, 2, 524, 312, 698);
priceAxis('candleAxis', 1288, 98, 1288, 1362, 4239, 106, 16.4, 22, 4, 450, 311, 1294);

function timeScale(id, dx, labels, x, w) {
    draw(id, dx, 548, labels.map(([lx, t]) => text(lx, 562, 'time-label', t)).join('') +
        rect(x + .5, 549.5, w, 15, `fill="none" stroke="${STEEL}"`));
}
timeScale('clusterTime', 6, [[-4, '02:18'], [87, '02:39'], [177, '03:20'], [267, '04:43'], [357, '06:00'], [447, '06:45']], 537, 13);
timeScale('candleTime', 786, [[835, '04:42'], [925, '05:18'], [1015, '05:54'], [1105, '06:30']], 1171, 37);

// Горизонтальный профиль: [y, правый край]
const PROFILE = [
    [176, 788], [180, 836], [184, 813], [188, 802], [192, 815], [196, 861], [201, 846], [205, 866], [209, 853],
    [213, 910], [217, 924], [221, 946], [225, 932], [229, 894], [234, 876], [238, 942], [242, 990], [246, 969],
    [250, 975], [254, 914], [258, 851], [262, 932], [266, 922], [270, 933], [274, 939], [278, 1060], [282, 1076],
    [286, 1143], [290, 1075], [294, 1078], [298, 1081], [303, 1137], [307, 1166], [311, 1134], [315, 1148],
    [323, 1003], [327, 994], [331, 977], [336, 892], [344, 812], [348, 817], [352, 816], [356, 789]
];
out = PROFILE.map(([y, x]) => rect(785.5, y - .5, x - 786, 2, 'fill="#222" stroke="#696969"')).join('');
out += rect(914.5, 253.5, 296, 2, 'fill="#443c30" stroke="#c8a888"');
out += rect(792.5, 339.5, 418, 2, 'fill="#443c30" stroke="#c8a888"');
out += rect(780.5, 318.5, 430, 2, 'fill="#4a7a10" stroke="#7fc41a"');
out += line(780, 311.5, 1300, 311.5, '#778899');
out += '<circle cx="891.500" cy="282.500" r="5.500" fill="#e89090" stroke="#ff9c9c"/>';
out += '<circle cx="966.500" cy="315.500" r="5.500" fill="#f4c0c0" stroke="#ffc0c8"/>';
out += '<circle cx="1041.500" cy="278.500" r="6.500" fill="#308c98" stroke="#28e0e4"/>';
out += '<circle cx="1153.500" cy="327.500" r="5.500" fill="#a84040" stroke="#e06060"/>';
out += '<circle cx="1198.500" cy="327.500" r="13" fill="#a04444" stroke="#e86060"/>';

// Свечи: максимум, верх и низ тела, минимум в единицах 1/3 пикселя от y=160
const CANDLES = [
    '366 391 403 416 g', '378 391 403 403 r', '391 391 403 403 r', '378 378 391 391 g', '366 379 379 392 d',
    '342 355 367 380 g', '355 355 367 380 r', '367 367 379 404 r', '379 379 391 404 g', '367 367 379 404 g',
    '342 355 380 380 g', '355 355 367 392 r', '367 367 367 392 d', '342 355 367 380 g', '342 355 367 404 r',
    '367 367 404 416 r', '391 391 403 403 g', '366 379 391 391 g', '366 379 379 391 d', '354 367 367 380 d',
    '367 367 415 415 r', '403 415 454 454 r', '442 442 454 467 g', '414 442 454 454 r', '454 454 467 491 r',
    '442 454 466 479 g', '403 442 454 467 g', '403 430 430 443 d', '415 430 442 442 r', '430 430 479 479 r',
    '454 466 490 490 r', '466 479 490 490 r', '466 479 490 490 g', '454 466 479 491 g', '355 355 479 491 g',
    '318 343 355 380 r', '306 331 343 356 g', '318 331 355 368 r', '343 343 355 368 r', '355 355 391 404 r',
    '379 379 454 467 r', '429 442 454 479 g', '442 442 454 479 r', '454 454 466 491 r', '430 442 454 491 g',
    '414 442 442 442 d', '430 442 454 454 r', '430 442 442 442 d', '414 442 454 454 r', '454 454 503 515 r',
    '490 490 515 515 r', '490 503 503 515 d', '466 490 515 515 g', '454 454 490 490 g', '378 415 454 454 g',
    '415 415 503 590 r', '454 454 503 530 g'
];
const barX = i => Math.round(787 + i * 7.464);
CANDLES.forEach((row, i) => {
    const p = row.split(' ');
    const [hi, a, b, lo] = p.slice(0, 4).map(v => Math.round(160 + v / 3));
    const x = barX(i);
    out += line(x + .5, hi, x + .5, lo, '#969696');
    if (p[4] === 'd') {
        out += line(x - 2, a + .5, x + 3, a + .5, '#969696');
    } else {
        out += rect(x - 1.5, a + .5, 4, Math.max(b - a - 1, 3), `fill="${p[4] === 'g' ? '#3cd23c' : '#e01414'}" stroke="${i === 34 ? '#3cd23c' : '#969696'}"`);
    }
});
out += rect(1018, 183, 8, 8, 'fill="#fff"');
out += text(1265, 329, 'timer end', '12:06:53') + text(1265, 342, 'timer end', '02:06');
out += '<path d="M1203 98h11l-5.500 5z" fill="#b0c4de"/><use href="#i-tools" x="789" y="430" width="18" height="18"/>';
draw('candlePlot', 786, 98, out);

// Объёмы
const VOLUMES = ('c6 r3 c3 c2 c3 c9 r4 r4 c5 c5 c6 r9 r8 c6 r16 r9 c3 c7 r4 c2 r5 r12 r8 r9 r16 c6 c5 c6 r5 r5 r5 ' +
    'c7 c8 c13 c22 c18 c15 r8 r6 r11 r13 r13 r12 r12 r13 r7 r4 r4 r13 r15 r5 c4 r11 c7 c45 r68 c7').split(' ');
draw('volumePlot', 786, 451, text(791, 468, '', 'Volume') + VOLUMES.map((v, i) => {
    const h = +v.slice(1);
    return rect(barX(i) - 2, 523 - h, 5, h, `fill="${v[0] === 'c' ? '#00b2b2' : '#a00000'}"`);
}).join(''));
draw('volumeAxis', 1288, 451, line(1288.5, 451, 1288.5, 524, STEEL) + line(1289, 516.5, 1301, 516.5, '#fff') +
    rect(1303.5, 508.5, 51, 16, 'fill="#808080" stroke="#fff"') + text(1352, 521, 'volume-value', '228'));
```
